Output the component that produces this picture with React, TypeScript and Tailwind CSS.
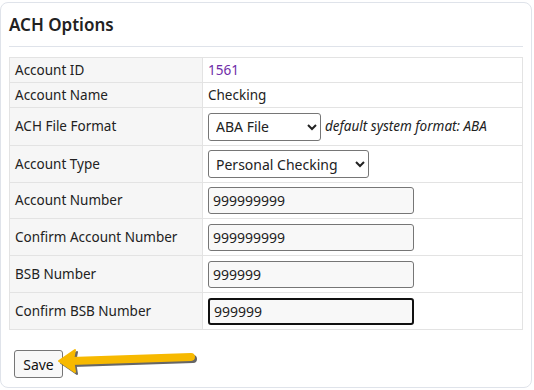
import React from "react";

const labelCell = "border border-[#e3e3e3] bg-[#f6f6f6] px-[5px] text-left font-normal text-[#222]";
const valueCell = "border border-[#e3e3e3] bg-white px-[5px]";
const inputBase =
	"h-[27px] w-[206px] rounded-[3px] bg-[#f8f8f8] px-[4px] text-[14px] text-[#222] outline-none";
const inputCls = `${inputBase} border border-[#767676]`;
const selectCls =
	"h-[28px] rounded-[3px] border border-[#767676] bg-white pl-[3px] text-[14px] text-[#222] outline-none";

function Arrow() {
	return (
		<svg width="150" height="34" viewBox="0 0 150 34" className="ml-[-6px]">
			<g transform="translate(2,2)" fill="#333" stroke="#333" opacity="0.75">
				<path d="M14 14 L134 10" strokeWidth="8" strokeLinecap="round" fill="none" />
				<path d="M2 14 L18 3 L16 13 L18 25 Z" strokeWidth="2" strokeLinejoin="round" />
			</g>
			<g fill="#f7b900" stroke="#f7b900">
				<path d="M14 14 L134 10" strokeWidth="8" strokeLinecap="round" fill="none" />
				<path d="M2 14 L18 3 L16 13 L18 25 Z" strokeWidth="2" strokeLinejoin="round" />
			</g>
		</svg>
	);
}

export default function App() {
	return (
		<div
			className="h-[390px] w-[534px] bg-white pt-[2px]"
			style={{ fontFamily: '"Noto Sans", "Open Sans", sans-serif' }}
		>
			<div className="h-[386px] w-[532px] rounded-[8px] border border-[#dfe3ea] px-[8px]">
				<h2 className="border-b border-[#dfe3ea] pb-[8px] pt-[9px] text-[17px] font-semibold leading-[26px] text-[#222]">
					ACH Options
				</h2>
				<table className="mt-[10px] w-[514px] border-collapse text-[13.5px] text-[#222]">
					<tbody>
						<tr className="h-[25px]">
							<th className={`${labelCell} w-[193px]`}>Account ID</th>
							<td className={`${valueCell} text-[#6f2da8]`}>1561</td>
						</tr>
						<tr className="h-[25px]">
							<th className={labelCell}>Account Name</th>
							<td className={valueCell}>Checking</td>
						</tr>
						<tr className="h-[38px]">
							<th className={labelCell}>ACH File Format</th>
							<td className={valueCell}>
								<div className="flex items-center gap-[4px]">
									<select className={`${selectCls} w-[113px]`} defaultValue="ABA File">
										<option>ABA File</option>
									</select>
									<span className="italic">default system format: ABA</span>
								</div>
							</td>
						</tr>
						<tr className="h-[37px]">
							<th className={labelCell}>Account Type</th>
							<td className={valueCell}>
								<select className={`${selectCls} w-[161px]`} defaultValue="Personal Checking">
									<option>Personal Checking</option>
								</select>
							</td>
						</tr>
						<tr className="h-[36px]">
							<th className={labelCell}>Account Number</th>
							<td className={valueCell}>
								<input className={inputCls} defaultValue="999999999" />
							</td>
						</tr>
						<tr className="h-[37px]">
							<th className={labelCell}>Confirm Account Number</th>
							<td className={valueCell}>
								<input className={inputCls} defaultValue="999999999" />
							</td>
						</tr>
						<tr className="h-[37px]">
							<th className={labelCell}>BSB Number</th>
							<td className={valueCell}>
								<input className={inputCls} defaultValue="999999" />
							</td>
						</tr>
						<tr className="h-[37px]">
							<th className={labelCell}>Confirm BSB Number</th>
							<td className={valueCell}>
								<input
									className={`${inputBase} border-2 border-[#111] px-[3px]`}
									defaultValue="999999"
								/>
							</td>
						</tr>
					</tbody>
				</table>
				<div className="mt-[17px] flex items-center pl-[5px]">
					<button className="h-[28px] w-[49px] rounded-[3px] border border-[#767676] bg-[#f8f8f8] text-[14px] text-[#111]">
						Save
					</button>
					<Arrow />
				</div>
			</div>
		</div>
	);
}
